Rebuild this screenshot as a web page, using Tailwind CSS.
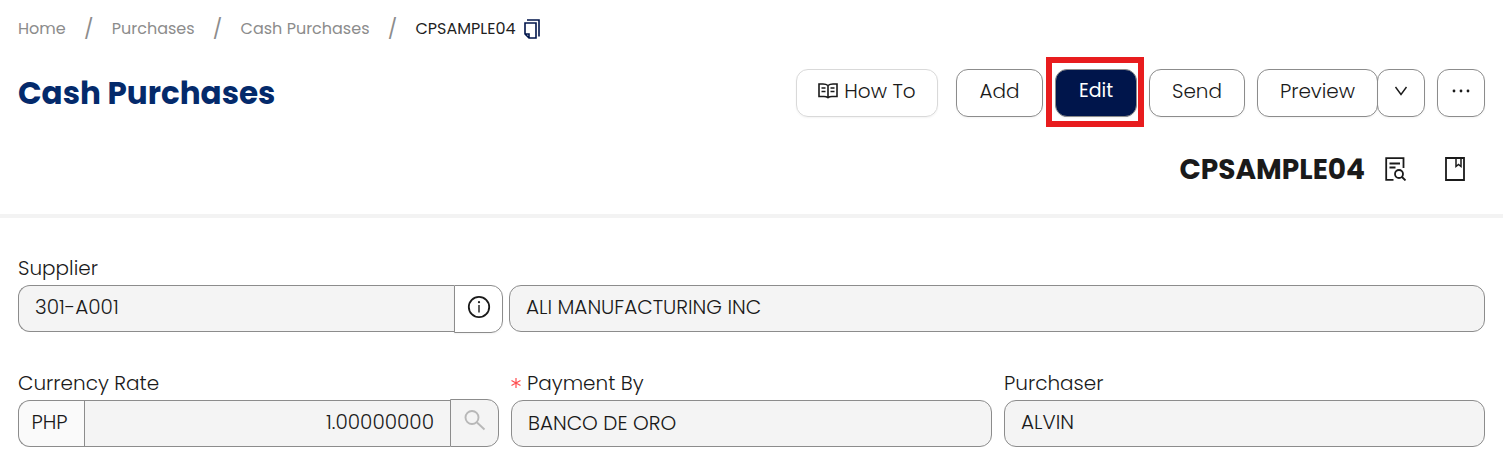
<!DOCTYPE html>
<html lang="en">
<head>
    <meta charset="UTF-8">
    <meta name="viewport" content="width=device-width, initial-scale=1.0">
    <title>Cash Purchases</title>
    <script src="https://cdn.jsdelivr.net/npm/@tailwindcss/browser@4"></script>
</head>
<body class="bg-white text-[#1a1a1a] text-[20px] font-light font-['Poppins','Inter',sans-serif]">
    <header class="px-[18px] pt-[17px] pb-7 border-b-4 border-[#f3f3f3]">
        <!-- Breadcrumb -->
        <nav aria-label="Breadcrumb">
            <ol class="flex items-center text-base leading-6 font-normal text-[#8c8c8c]">
                <li><a href="#">Home</a></li>
                <li class="w-[46px] text-center text-xl leading-6" aria-hidden="true">/</li>
                <li><a href="#">Purchases</a></li>
                <li class="w-[46px] text-center text-xl leading-6" aria-hidden="true">/</li>
                <li><a href="#">Cash Purchases</a></li>
                <li class="w-[46px] text-center text-xl leading-6" aria-hidden="true">/</li>
                <li class="flex items-center gap-2 text-[#1f1f1f]">
                    CPSAMPLE04
                    <button type="button" aria-label="Copy">
                        <svg class="block w-4 h-5" viewBox="0 0 16 20" fill="none" stroke="#00154b" stroke-width="1.6">
                            <path d="M3 1h12v16.500M1 4h11v15H5l-4-4zM1 15h4v4" />
                        </svg>
                    </button>
                </li>
            </ol>
        </nav>

        <!-- Title + actions -->
        <div class="mt-7 flex items-center justify-between">
            <h1 class="text-[31px] leading-10 font-bold text-[#042a6b]">Cash Purchases</h1>
            <div class="flex gap-3">
                <button type="button" class="mr-[6px] h-12 min-w-[142px] pb-1 flex items-center justify-center gap-[6px] rounded-xl border border-[#d9d9d9] shadow-xs">
                    <svg class="w-5 h-4" viewBox="0 0 20 16" fill="none" stroke="currentColor" stroke-width="1.6">
                        <path d="M10 2.500C8.500 1.300 7 1 5 1H1v12.500h5c2 0 3 .5 4 1.200 1-.7 2-1.200 4-1.200h5V1h-4c-2 0-3.500.3-5 1.500zM10 2.500v12" />
                        <path d="M3.500 5H7.500M3.500 8.500H7.500M12.500 5h4M12.500 8.500h4" stroke-width="1.300" />
                    </svg>
                    How To
                </button>
                <button type="button" class="h-12 min-w-[87px] pb-1 rounded-xl border border-[#8c8c8c] shadow-xs">Add</button>
                <div class="relative">
                    <button type="button" class="h-12 min-w-[82px] pb-1 rounded-xl border border-[#8c8c8c] bg-[#00154b] text-white font-normal text-[19px] shadow-xs">Edit</button>
                    <span class="absolute -left-[9px] -right-[7px] -top-3 -bottom-[10px] border-[6px] border-[#e81c1e] pointer-events-none"></span>
                </div>
                <button type="button" class="h-12 min-w-[96px] pb-1 rounded-xl border border-[#8c8c8c] shadow-xs">Send</button>
                <div class="flex">
                    <button type="button" class="h-12 min-w-[121px] pb-1 rounded-xl border border-[#8c8c8c] shadow-xs">Preview</button>
                    <button type="button" aria-label="More previews" class="-ml-px h-12 w-12 pb-1 flex items-center justify-center rounded-xl border border-[#8c8c8c] shadow-xs">
                        <svg class="w-[14px] h-[10px]" viewBox="0 0 14 10" fill="none" stroke="currentColor" stroke-width="1.4">
                            <path d="M1.500 1 7 8.500 12.500 1" />
                        </svg>
                    </button>
                </div>
                <button type="button" aria-label="More" class="h-12 w-12 pb-1 flex items-center justify-center rounded-xl border border-[#8c8c8c] shadow-xs">
                    <svg class="w-[18px] h-1" viewBox="0 0 18 4" fill="currentColor">
                        <circle cx="2" cy="2" r="1.400" /><circle cx="9" cy="2" r="1.400" /><circle cx="16" cy="2" r="1.400" />
                    </svg>
                </button>
            </div>
        </div>

        <!-- Document number -->
        <div class="mt-[37px] pr-5 flex items-center justify-end">
            <h2 class="text-[28px] leading-8 font-bold">CPSAMPLE04</h2>
            <button type="button" aria-label="View log" class="ml-5 pb-[2px]">
                <svg class="block w-[22px] h-6" viewBox="0 0 22 24" fill="none" stroke="currentColor" stroke-width="1.800">
                    <path d="M18.500 11V1.200H1.200v21.600h7.300M4.500 6.500h10.500M4.500 10.500h6" />
                    <circle cx="14" cy="17" r="4" />
                    <path d="m17 20 3.500 3.500" />
                </svg>
            </button>
            <button type="button" aria-label="Bookmark" class="ml-[38px] pb-[2px]">
                <svg class="block w-5 h-6" viewBox="0 0 20 24" fill="none" stroke="currentColor" stroke-width="1.800">
                    <path d="M1 1h18v22H1z" />
                    <path d="M11 1v8.500l2.500-2 2.500 2V1" stroke-width="1.500" />
                </svg>
            </button>
        </div>
    </header>

    <main class="px-[18px] pt-[35px] pb-6 flex flex-col gap-9">
        <!-- Supplier -->
        <div>
            <label for="supplier" class="block mb-[2px] leading-[30px]">Supplier</label>
            <div class="grid grid-cols-[485fr_976fr] gap-[6px]">
                <div class="flex">
                    <input id="supplier" type="text" value="301-A001" readonly class="flex-1 min-w-0 h-[47px] pl-4 pb-1 rounded-l-xl border border-r-0 border-[#8c8c8c] bg-[#f4f4f4] outline-none">
                    <button type="button" aria-label="Supplier info" class="h-12 w-[49px] -mb-px pb-1 flex items-center justify-center rounded-r-xl border border-[#8c8c8c] shadow-xs">
                        <svg class="w-6 h-6" viewBox="0 0 24 24" fill="none" stroke="currentColor" stroke-width="1.800">
                            <circle cx="12" cy="12" r="10.200" />
                            <path d="M12 10V17.500" stroke-width="1.400" />
                            <circle cx="12" cy="7.200" r="1.100" fill="currentColor" stroke="none" />
                        </svg>
                    </button>
                </div>
                <input type="text" aria-label="Supplier name" value="ALI MANUFACTURING INC" readonly class="w-full h-[47px] pl-4 pb-1 rounded-xl border border-[#8c8c8c] bg-[#f4f4f4] outline-none">
            </div>
        </div>

        <!-- Currency, payment, purchaser -->
        <div class="grid grid-cols-3 gap-3">
            <div>
                <label for="rate" class="block mb-[2px] leading-[30px]">Currency Rate</label>
                <div class="flex">
                    <span class="h-[47px] w-[66px] pb-1 pr-1 flex items-center justify-center rounded-l-xl border border-r-0 border-[#8c8c8c] bg-[#fafafa]">PHP</span>
                    <input id="rate" type="text" value="1.00000000" readonly class="flex-1 min-w-0 h-[47px] pr-4 pb-1 text-right border border-r-0 border-[#8c8c8c] bg-[#f4f4f4] outline-none">
                    <button type="button" aria-label="Search rate" disabled class="h-12 w-[49px] -mt-px pb-[6px] flex items-center justify-center rounded-r-xl border border-[#8c8c8c] bg-[#f4f4f4] text-[#b8b8b8]">
                        <svg class="w-[22px] h-[22px]" viewBox="0 0 22 22" fill="none" stroke="currentColor" stroke-width="1.900">
                            <circle cx="8" cy="8.500" r="6.500" />
                            <path d="m13 13.500 7.500 7" />
                        </svg>
                    </button>
                </div>
            </div>
            <div>
                <label for="payment" class="mb-[2px] leading-[30px] flex items-center gap-[6px]">
                    <svg class="w-[10px] h-[10px]" viewBox="0 0 10 10" fill="none" stroke="#ff4d4f" stroke-width="1.200" aria-hidden="true">
                        <path d="M5 0v10M.5 2.500l9 5M9.500 2.500l-9 5" />
                    </svg>
                    Payment By
                </label>
                <input id="payment" type="text" value="BANCO DE ORO" readonly class="w-full h-[47px] pl-4 pb-[2px] rounded-xl border border-[#8c8c8c] bg-[#f4f4f4] outline-none">
            </div>
            <div>
                <label for="purchaser" class="block mb-[2px] leading-[30px]">Purchaser</label>
                <input id="purchaser" type="text" value="ALVIN" readonly class="w-full h-[47px] pl-4 pb-1 rounded-xl border border-[#8c8c8c] bg-[#f4f4f4] outline-none">
            </div>
        </div>
    </main>
</body>
</html>
